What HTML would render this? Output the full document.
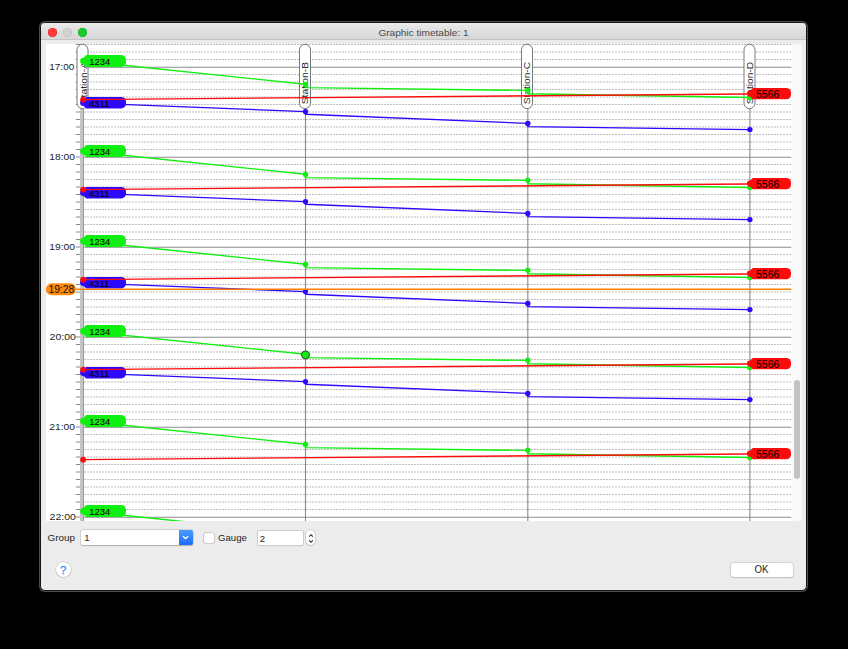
<!DOCTYPE html>
<html><head><meta charset="utf-8">
<style>
html,body{margin:0;padding:0;background:#000;width:848px;height:649px;overflow:hidden;font-family:"Liberation Sans",sans-serif;}
#win{position:absolute;left:40px;top:22px;width:765.2px;height:566.6px;background:#ececec;border:1px solid #151515;border-radius:5px;box-shadow:0 0 0 1px #505050;overflow:hidden;}
#title{position:absolute;left:0;top:0;width:100%;height:16.3px;background:linear-gradient(#eeeeee,#e6e6e6 15%,#d7d7d7);border-bottom:1.2px solid #c4c4c4;}
svg{position:absolute;left:0;top:0;}
svg text{font-family:"Liberation Sans",sans-serif;}
.ab{position:absolute;}
</style></head><body>
<div id="win">
  <div id="title"></div>
</div>
<div class="ab" style="left:47.9px;top:27.7px;width:9px;height:9px;border-radius:50%;background:#fe3a3a;box-shadow:inset 0 0 0 0.6px #e0262a;"></div>
<div class="ab" style="left:62.9px;top:27.7px;width:9px;height:9px;border-radius:50%;background:#d2d2d2;box-shadow:inset 0 0 0 0.6px #c0c0c0;"></div>
<div class="ab" style="left:78px;top:27.7px;width:9px;height:9px;border-radius:50%;background:#1ec932;box-shadow:inset 0 0 0 0.6px #14ad24;"></div>
<div class="ab" style="left:46px;top:43.5px;width:745.5px;height:477.5px;background:#fff;"></div>
<div class="ab" style="left:791.5px;top:43.5px;width:10.5px;height:477.5px;background:#f9f9f9;"></div>
<div class="ab" style="left:793.7px;top:380.4px;width:6px;height:98.6px;border-radius:3px;background:#c2c2c2;"></div>
<div class="ab" style="left:81.3px;top:530.2px;width:111.3px;height:14.8px;background:#fff;box-shadow:0 0 0 0.5px #b8b8b8, 0 0.5px 1px #aaa;border-radius:2px;overflow:hidden;">
  <div class="ab" style="right:0;top:0;width:13.2px;height:14.8px;background:linear-gradient(#4b9cfd,#1a6cf7);"></div>
</div>
<svg width="13" height="15" style="left:179.4px;top:530.2px;" viewBox="0 0 13 15"><polyline points="4,6.2 6.6,8.6 9.2,6.2" fill="none" stroke="#fff" stroke-width="1.4"/></svg>
<div class="ab" style="left:204.3px;top:533px;width:10px;height:10px;background:#fff;border-radius:2px;box-shadow:0 0 0 0.6px #b0b0b0;"></div>
<div class="ab" style="left:256.6px;top:529.8px;width:47px;height:16px;background:#fff;border-radius:2px;box-shadow:inset 0 0 0 1px #cdcdcd, 0 0.3px 0.6px #c8c8c8;"></div>
<div class="ab" style="left:306px;top:530.2px;width:8.6px;height:15.3px;background:#fff;border-radius:4.5px;box-shadow:0 0 0 0.7px #c4c4c4, 0 0.5px 0.8px #c0c0c0;"></div>
<svg width="10" height="16" style="left:305.5px;top:529.8px;" viewBox="0 0 10 16"><polyline points="3.1,6.6 5,4.7 6.9,6.6" fill="none" stroke="#2a2a2a" stroke-width="1.15"/><polyline points="3.1,10.4 5,12.3 6.9,10.4" fill="none" stroke="#2a2a2a" stroke-width="1.15"/></svg>
<div class="ab" style="left:55.7px;top:562.1px;width:15.4px;height:15.4px;border-radius:50%;background:#fff;box-shadow:0 0 0 0.6px #c4c4c4, 0 0.5px 1px #bbb;"></div>
<div class="ab" style="left:730.5px;top:562.8px;width:62px;height:14.6px;background:#fff;border-radius:3px;box-shadow:0 0 0 0.6px #c4c4c4, 0 0.5px 1px #bbb;"></div>
<svg width="848" height="649" viewBox="0 0 848 649">
<defs><clipPath id="pc"><rect x="46" y="43.5" width="745.5" height="477.5"/></clipPath></defs>
<g clip-path="url(#pc)">
<line x1="84" y1="44.5" x2="791.5" y2="44.5" stroke="#bdbdbd" stroke-width="1" stroke-dasharray="2 1"/>
<line x1="75.8" y1="44.5" x2="80" y2="44.5" stroke="#8a8a8a" stroke-width="1"/>
<line x1="84" y1="52.0" x2="791.5" y2="52.0" stroke="#bdbdbd" stroke-width="1" stroke-dasharray="2 1"/>
<line x1="75.8" y1="52.0" x2="80" y2="52.0" stroke="#8a8a8a" stroke-width="1"/>
<line x1="84" y1="59.5" x2="791.5" y2="59.5" stroke="#bdbdbd" stroke-width="1" stroke-dasharray="2 1"/>
<line x1="75.8" y1="59.5" x2="80" y2="59.5" stroke="#8a8a8a" stroke-width="1"/>
<line x1="84" y1="67.25" x2="791.5" y2="67.25" stroke="#8c8c8c" stroke-width="1.1"/>
<line x1="75.8" y1="67.0" x2="80" y2="67.0" stroke="#8a8a8a" stroke-width="1"/>
<line x1="84" y1="74.5" x2="791.5" y2="74.5" stroke="#bdbdbd" stroke-width="1" stroke-dasharray="2 1"/>
<line x1="75.8" y1="74.5" x2="80" y2="74.5" stroke="#8a8a8a" stroke-width="1"/>
<line x1="84" y1="82.0" x2="791.5" y2="82.0" stroke="#bdbdbd" stroke-width="1" stroke-dasharray="2 1"/>
<line x1="75.8" y1="82.0" x2="80" y2="82.0" stroke="#8a8a8a" stroke-width="1"/>
<line x1="84" y1="89.5" x2="791.5" y2="89.5" stroke="#bdbdbd" stroke-width="1" stroke-dasharray="2 1"/>
<line x1="75.8" y1="89.5" x2="80" y2="89.5" stroke="#8a8a8a" stroke-width="1"/>
<line x1="84" y1="97.0" x2="791.5" y2="97.0" stroke="#bdbdbd" stroke-width="1" stroke-dasharray="2 1"/>
<line x1="75.8" y1="97.0" x2="80" y2="97.0" stroke="#8a8a8a" stroke-width="1"/>
<line x1="84" y1="104.5" x2="791.5" y2="104.5" stroke="#bdbdbd" stroke-width="1" stroke-dasharray="2 1"/>
<line x1="75.8" y1="104.5" x2="80" y2="104.5" stroke="#8a8a8a" stroke-width="1"/>
<line x1="84" y1="112.0" x2="791.5" y2="112.0" stroke="#bdbdbd" stroke-width="1" stroke-dasharray="2 1"/>
<line x1="75.8" y1="112.0" x2="80" y2="112.0" stroke="#8a8a8a" stroke-width="1"/>
<line x1="84" y1="119.5" x2="791.5" y2="119.5" stroke="#bdbdbd" stroke-width="1" stroke-dasharray="2 1"/>
<line x1="75.8" y1="119.5" x2="80" y2="119.5" stroke="#8a8a8a" stroke-width="1"/>
<line x1="84" y1="127.0" x2="791.5" y2="127.0" stroke="#bdbdbd" stroke-width="1" stroke-dasharray="2 1"/>
<line x1="75.8" y1="127.0" x2="80" y2="127.0" stroke="#8a8a8a" stroke-width="1"/>
<line x1="84" y1="134.5" x2="791.5" y2="134.5" stroke="#bdbdbd" stroke-width="1" stroke-dasharray="2 1"/>
<line x1="75.8" y1="134.5" x2="80" y2="134.5" stroke="#8a8a8a" stroke-width="1"/>
<line x1="84" y1="142.0" x2="791.5" y2="142.0" stroke="#bdbdbd" stroke-width="1" stroke-dasharray="2 1"/>
<line x1="75.8" y1="142.0" x2="80" y2="142.0" stroke="#8a8a8a" stroke-width="1"/>
<line x1="84" y1="149.5" x2="791.5" y2="149.5" stroke="#bdbdbd" stroke-width="1" stroke-dasharray="2 1"/>
<line x1="75.8" y1="149.5" x2="80" y2="149.5" stroke="#8a8a8a" stroke-width="1"/>
<line x1="84" y1="157.25" x2="791.5" y2="157.25" stroke="#8c8c8c" stroke-width="1.1"/>
<line x1="75.8" y1="157.0" x2="80" y2="157.0" stroke="#8a8a8a" stroke-width="1"/>
<line x1="84" y1="164.5" x2="791.5" y2="164.5" stroke="#bdbdbd" stroke-width="1" stroke-dasharray="2 1"/>
<line x1="75.8" y1="164.5" x2="80" y2="164.5" stroke="#8a8a8a" stroke-width="1"/>
<line x1="84" y1="172.0" x2="791.5" y2="172.0" stroke="#bdbdbd" stroke-width="1" stroke-dasharray="2 1"/>
<line x1="75.8" y1="172.0" x2="80" y2="172.0" stroke="#8a8a8a" stroke-width="1"/>
<line x1="84" y1="179.5" x2="791.5" y2="179.5" stroke="#bdbdbd" stroke-width="1" stroke-dasharray="2 1"/>
<line x1="75.8" y1="179.5" x2="80" y2="179.5" stroke="#8a8a8a" stroke-width="1"/>
<line x1="84" y1="187.0" x2="791.5" y2="187.0" stroke="#bdbdbd" stroke-width="1" stroke-dasharray="2 1"/>
<line x1="75.8" y1="187.0" x2="80" y2="187.0" stroke="#8a8a8a" stroke-width="1"/>
<line x1="84" y1="194.5" x2="791.5" y2="194.5" stroke="#bdbdbd" stroke-width="1" stroke-dasharray="2 1"/>
<line x1="75.8" y1="194.5" x2="80" y2="194.5" stroke="#8a8a8a" stroke-width="1"/>
<line x1="84" y1="202.0" x2="791.5" y2="202.0" stroke="#bdbdbd" stroke-width="1" stroke-dasharray="2 1"/>
<line x1="75.8" y1="202.0" x2="80" y2="202.0" stroke="#8a8a8a" stroke-width="1"/>
<line x1="84" y1="209.5" x2="791.5" y2="209.5" stroke="#bdbdbd" stroke-width="1" stroke-dasharray="2 1"/>
<line x1="75.8" y1="209.5" x2="80" y2="209.5" stroke="#8a8a8a" stroke-width="1"/>
<line x1="84" y1="217.0" x2="791.5" y2="217.0" stroke="#bdbdbd" stroke-width="1" stroke-dasharray="2 1"/>
<line x1="75.8" y1="217.0" x2="80" y2="217.0" stroke="#8a8a8a" stroke-width="1"/>
<line x1="84" y1="224.5" x2="791.5" y2="224.5" stroke="#bdbdbd" stroke-width="1" stroke-dasharray="2 1"/>
<line x1="75.8" y1="224.5" x2="80" y2="224.5" stroke="#8a8a8a" stroke-width="1"/>
<line x1="84" y1="232.0" x2="791.5" y2="232.0" stroke="#bdbdbd" stroke-width="1" stroke-dasharray="2 1"/>
<line x1="75.8" y1="232.0" x2="80" y2="232.0" stroke="#8a8a8a" stroke-width="1"/>
<line x1="84" y1="239.5" x2="791.5" y2="239.5" stroke="#bdbdbd" stroke-width="1" stroke-dasharray="2 1"/>
<line x1="75.8" y1="239.5" x2="80" y2="239.5" stroke="#8a8a8a" stroke-width="1"/>
<line x1="84" y1="247.25" x2="791.5" y2="247.25" stroke="#8c8c8c" stroke-width="1.1"/>
<line x1="75.8" y1="247.0" x2="80" y2="247.0" stroke="#8a8a8a" stroke-width="1"/>
<line x1="84" y1="254.5" x2="791.5" y2="254.5" stroke="#bdbdbd" stroke-width="1" stroke-dasharray="2 1"/>
<line x1="75.8" y1="254.5" x2="80" y2="254.5" stroke="#8a8a8a" stroke-width="1"/>
<line x1="84" y1="262.0" x2="791.5" y2="262.0" stroke="#bdbdbd" stroke-width="1" stroke-dasharray="2 1"/>
<line x1="75.8" y1="262.0" x2="80" y2="262.0" stroke="#8a8a8a" stroke-width="1"/>
<line x1="84" y1="269.5" x2="791.5" y2="269.5" stroke="#bdbdbd" stroke-width="1" stroke-dasharray="2 1"/>
<line x1="75.8" y1="269.5" x2="80" y2="269.5" stroke="#8a8a8a" stroke-width="1"/>
<line x1="84" y1="277.0" x2="791.5" y2="277.0" stroke="#bdbdbd" stroke-width="1" stroke-dasharray="2 1"/>
<line x1="75.8" y1="277.0" x2="80" y2="277.0" stroke="#8a8a8a" stroke-width="1"/>
<line x1="84" y1="284.5" x2="791.5" y2="284.5" stroke="#bdbdbd" stroke-width="1" stroke-dasharray="2 1"/>
<line x1="75.8" y1="284.5" x2="80" y2="284.5" stroke="#8a8a8a" stroke-width="1"/>
<line x1="84" y1="292.0" x2="791.5" y2="292.0" stroke="#bdbdbd" stroke-width="1" stroke-dasharray="2 1"/>
<line x1="75.8" y1="292.0" x2="80" y2="292.0" stroke="#8a8a8a" stroke-width="1"/>
<line x1="84" y1="299.5" x2="791.5" y2="299.5" stroke="#bdbdbd" stroke-width="1" stroke-dasharray="2 1"/>
<line x1="75.8" y1="299.5" x2="80" y2="299.5" stroke="#8a8a8a" stroke-width="1"/>
<line x1="84" y1="307.0" x2="791.5" y2="307.0" stroke="#bdbdbd" stroke-width="1" stroke-dasharray="2 1"/>
<line x1="75.8" y1="307.0" x2="80" y2="307.0" stroke="#8a8a8a" stroke-width="1"/>
<line x1="84" y1="314.5" x2="791.5" y2="314.5" stroke="#bdbdbd" stroke-width="1" stroke-dasharray="2 1"/>
<line x1="75.8" y1="314.5" x2="80" y2="314.5" stroke="#8a8a8a" stroke-width="1"/>
<line x1="84" y1="322.0" x2="791.5" y2="322.0" stroke="#bdbdbd" stroke-width="1" stroke-dasharray="2 1"/>
<line x1="75.8" y1="322.0" x2="80" y2="322.0" stroke="#8a8a8a" stroke-width="1"/>
<line x1="84" y1="329.5" x2="791.5" y2="329.5" stroke="#bdbdbd" stroke-width="1" stroke-dasharray="2 1"/>
<line x1="75.8" y1="329.5" x2="80" y2="329.5" stroke="#8a8a8a" stroke-width="1"/>
<line x1="84" y1="337.25" x2="791.5" y2="337.25" stroke="#8c8c8c" stroke-width="1.1"/>
<line x1="75.8" y1="337.0" x2="80" y2="337.0" stroke="#8a8a8a" stroke-width="1"/>
<line x1="84" y1="344.5" x2="791.5" y2="344.5" stroke="#bdbdbd" stroke-width="1" stroke-dasharray="2 1"/>
<line x1="75.8" y1="344.5" x2="80" y2="344.5" stroke="#8a8a8a" stroke-width="1"/>
<line x1="84" y1="352.0" x2="791.5" y2="352.0" stroke="#bdbdbd" stroke-width="1" stroke-dasharray="2 1"/>
<line x1="75.8" y1="352.0" x2="80" y2="352.0" stroke="#8a8a8a" stroke-width="1"/>
<line x1="84" y1="359.5" x2="791.5" y2="359.5" stroke="#bdbdbd" stroke-width="1" stroke-dasharray="2 1"/>
<line x1="75.8" y1="359.5" x2="80" y2="359.5" stroke="#8a8a8a" stroke-width="1"/>
<line x1="84" y1="367.0" x2="791.5" y2="367.0" stroke="#bdbdbd" stroke-width="1" stroke-dasharray="2 1"/>
<line x1="75.8" y1="367.0" x2="80" y2="367.0" stroke="#8a8a8a" stroke-width="1"/>
<line x1="84" y1="374.5" x2="791.5" y2="374.5" stroke="#bdbdbd" stroke-width="1" stroke-dasharray="2 1"/>
<line x1="75.8" y1="374.5" x2="80" y2="374.5" stroke="#8a8a8a" stroke-width="1"/>
<line x1="84" y1="382.0" x2="791.5" y2="382.0" stroke="#bdbdbd" stroke-width="1" stroke-dasharray="2 1"/>
<line x1="75.8" y1="382.0" x2="80" y2="382.0" stroke="#8a8a8a" stroke-width="1"/>
<line x1="84" y1="389.5" x2="791.5" y2="389.5" stroke="#bdbdbd" stroke-width="1" stroke-dasharray="2 1"/>
<line x1="75.8" y1="389.5" x2="80" y2="389.5" stroke="#8a8a8a" stroke-width="1"/>
<line x1="84" y1="397.0" x2="791.5" y2="397.0" stroke="#bdbdbd" stroke-width="1" stroke-dasharray="2 1"/>
<line x1="75.8" y1="397.0" x2="80" y2="397.0" stroke="#8a8a8a" stroke-width="1"/>
<line x1="84" y1="404.5" x2="791.5" y2="404.5" stroke="#bdbdbd" stroke-width="1" stroke-dasharray="2 1"/>
<line x1="75.8" y1="404.5" x2="80" y2="404.5" stroke="#8a8a8a" stroke-width="1"/>
<line x1="84" y1="412.0" x2="791.5" y2="412.0" stroke="#bdbdbd" stroke-width="1" stroke-dasharray="2 1"/>
<line x1="75.8" y1="412.0" x2="80" y2="412.0" stroke="#8a8a8a" stroke-width="1"/>
<line x1="84" y1="419.5" x2="791.5" y2="419.5" stroke="#bdbdbd" stroke-width="1" stroke-dasharray="2 1"/>
<line x1="75.8" y1="419.5" x2="80" y2="419.5" stroke="#8a8a8a" stroke-width="1"/>
<line x1="84" y1="427.25" x2="791.5" y2="427.25" stroke="#8c8c8c" stroke-width="1.1"/>
<line x1="75.8" y1="427.0" x2="80" y2="427.0" stroke="#8a8a8a" stroke-width="1"/>
<line x1="84" y1="434.5" x2="791.5" y2="434.5" stroke="#bdbdbd" stroke-width="1" stroke-dasharray="2 1"/>
<line x1="75.8" y1="434.5" x2="80" y2="434.5" stroke="#8a8a8a" stroke-width="1"/>
<line x1="84" y1="442.0" x2="791.5" y2="442.0" stroke="#bdbdbd" stroke-width="1" stroke-dasharray="2 1"/>
<line x1="75.8" y1="442.0" x2="80" y2="442.0" stroke="#8a8a8a" stroke-width="1"/>
<line x1="84" y1="449.5" x2="791.5" y2="449.5" stroke="#bdbdbd" stroke-width="1" stroke-dasharray="2 1"/>
<line x1="75.8" y1="449.5" x2="80" y2="449.5" stroke="#8a8a8a" stroke-width="1"/>
<line x1="84" y1="457.0" x2="791.5" y2="457.0" stroke="#bdbdbd" stroke-width="1" stroke-dasharray="2 1"/>
<line x1="75.8" y1="457.0" x2="80" y2="457.0" stroke="#8a8a8a" stroke-width="1"/>
<line x1="84" y1="464.5" x2="791.5" y2="464.5" stroke="#bdbdbd" stroke-width="1" stroke-dasharray="2 1"/>
<line x1="75.8" y1="464.5" x2="80" y2="464.5" stroke="#8a8a8a" stroke-width="1"/>
<line x1="84" y1="472.0" x2="791.5" y2="472.0" stroke="#bdbdbd" stroke-width="1" stroke-dasharray="2 1"/>
<line x1="75.8" y1="472.0" x2="80" y2="472.0" stroke="#8a8a8a" stroke-width="1"/>
<line x1="84" y1="479.5" x2="791.5" y2="479.5" stroke="#bdbdbd" stroke-width="1" stroke-dasharray="2 1"/>
<line x1="75.8" y1="479.5" x2="80" y2="479.5" stroke="#8a8a8a" stroke-width="1"/>
<line x1="84" y1="487.0" x2="791.5" y2="487.0" stroke="#bdbdbd" stroke-width="1" stroke-dasharray="2 1"/>
<line x1="75.8" y1="487.0" x2="80" y2="487.0" stroke="#8a8a8a" stroke-width="1"/>
<line x1="84" y1="494.5" x2="791.5" y2="494.5" stroke="#bdbdbd" stroke-width="1" stroke-dasharray="2 1"/>
<line x1="75.8" y1="494.5" x2="80" y2="494.5" stroke="#8a8a8a" stroke-width="1"/>
<line x1="84" y1="502.0" x2="791.5" y2="502.0" stroke="#bdbdbd" stroke-width="1" stroke-dasharray="2 1"/>
<line x1="75.8" y1="502.0" x2="80" y2="502.0" stroke="#8a8a8a" stroke-width="1"/>
<line x1="84" y1="509.5" x2="791.5" y2="509.5" stroke="#bdbdbd" stroke-width="1" stroke-dasharray="2 1"/>
<line x1="75.8" y1="509.5" x2="80" y2="509.5" stroke="#8a8a8a" stroke-width="1"/>
<line x1="84" y1="517.25" x2="791.5" y2="517.25" stroke="#8c8c8c" stroke-width="1.1"/>
<line x1="75.8" y1="517.0" x2="80" y2="517.0" stroke="#8a8a8a" stroke-width="1"/>
<text x="49.3" y="70.05" font-size="9.8" fill="#1e1e1e" textLength="25.0" lengthAdjust="spacingAndGlyphs">17:00</text>
<text x="49.3" y="160.05" font-size="9.8" fill="#1e1e1e" textLength="25.8" lengthAdjust="spacingAndGlyphs">18:00</text>
<text x="49.3" y="250.05" font-size="9.8" fill="#1e1e1e" textLength="25.8" lengthAdjust="spacingAndGlyphs">19:00</text>
<text x="49.6" y="340.05" font-size="9.8" fill="#1e1e1e" textLength="26.3" lengthAdjust="spacingAndGlyphs">20:00</text>
<text x="49.3" y="430.05" font-size="9.8" fill="#1e1e1e" textLength="25.8" lengthAdjust="spacingAndGlyphs">21:00</text>
<text x="49.6" y="520.05" font-size="9.8" fill="#1e1e1e" textLength="26.3" lengthAdjust="spacingAndGlyphs">22:00</text>
<rect x="80" y="43.5" width="4" height="477.5" fill="#c4c4c4"/>
<line x1="83.5" y1="43.5" x2="83.5" y2="521" stroke="#9a9a9a" stroke-width="1"/>
<line x1="305.5" y1="43.5" x2="305.5" y2="525" stroke="#8a8a8a" stroke-width="1.1"/>
<line x1="527.8" y1="43.5" x2="527.8" y2="525" stroke="#8a8a8a" stroke-width="1.1"/>
<line x1="749.9" y1="43.5" x2="749.9" y2="525" stroke="#8a8a8a" stroke-width="1.1"/>
<rect x="77.0" y="44.3" width="11" height="64.3" rx="5.5" ry="5.5" fill="#fff" stroke="#6a6a6a" stroke-width="0.9"/>
<text transform="translate(86.5,104.3) rotate(-90)" font-size="9.6" fill="#2a2a2a" textLength="42.4" lengthAdjust="spacingAndGlyphs">Station-A</text>
<rect x="299.5" y="44.3" width="11" height="64.3" rx="5.5" ry="5.5" fill="#fff" stroke="#6a6a6a" stroke-width="0.9"/>
<text transform="translate(308.0,104.3) rotate(-90)" font-size="9.6" fill="#2a2a2a" textLength="42.4" lengthAdjust="spacingAndGlyphs">Station-B</text>
<rect x="521.5" y="44.3" width="11" height="64.3" rx="5.5" ry="5.5" fill="#fff" stroke="#6a6a6a" stroke-width="0.9"/>
<text transform="translate(530.0,104.3) rotate(-90)" font-size="9.6" fill="#2a2a2a" textLength="42.4" lengthAdjust="spacingAndGlyphs">Station-C</text>
<rect x="744.0" y="44.3" width="11" height="64.3" rx="5.5" ry="5.5" fill="#fff" stroke="#6a6a6a" stroke-width="0.9"/>
<text transform="translate(752.5,104.3) rotate(-90)" font-size="9.6" fill="#2a2a2a" textLength="42.4" lengthAdjust="spacingAndGlyphs">Station-D</text>
<polyline points="82.50,61.00 305.50,84.30 305.50,87.60 527.80,90.40 527.80,93.80 749.90,97.50" fill="none" stroke="#10f010" stroke-width="1.4" stroke-linejoin="round"/>
<polyline points="82.50,151.00 305.50,174.30 305.50,177.60 527.80,180.40 527.80,183.80 749.90,187.50" fill="none" stroke="#10f010" stroke-width="1.4" stroke-linejoin="round"/>
<polyline points="82.50,241.00 305.50,264.30 305.50,267.60 527.80,270.40 527.80,273.80 749.90,277.50" fill="none" stroke="#10f010" stroke-width="1.4" stroke-linejoin="round"/>
<polyline points="82.50,331.00 305.50,354.30 305.50,357.60 527.80,360.40 527.80,363.80 749.90,367.50" fill="none" stroke="#10f010" stroke-width="1.4" stroke-linejoin="round"/>
<polyline points="82.50,421.00 305.50,444.30 305.50,447.60 527.80,450.40 527.80,453.80 749.90,457.50" fill="none" stroke="#10f010" stroke-width="1.4" stroke-linejoin="round"/>
<polyline points="82.50,511.00 305.50,534.30 305.50,537.60 527.80,540.40 527.80,543.80 749.90,547.50" fill="none" stroke="#10f010" stroke-width="1.4" stroke-linejoin="round"/>
<circle cx="305.5" cy="84.5" r="2.7" fill="#10f010"/>
<circle cx="527.8" cy="90.3" r="2.7" fill="#10f010"/>
<circle cx="749.9" cy="97.5" r="2.7" fill="#10f010"/>
<circle cx="305.5" cy="174.5" r="2.7" fill="#10f010"/>
<circle cx="527.8" cy="180.3" r="2.7" fill="#10f010"/>
<circle cx="749.9" cy="187.5" r="2.7" fill="#10f010"/>
<circle cx="305.5" cy="264.5" r="2.7" fill="#10f010"/>
<circle cx="527.8" cy="270.3" r="2.7" fill="#10f010"/>
<circle cx="749.9" cy="277.5" r="2.7" fill="#10f010"/>
<circle cx="305.5" cy="354.9" r="4" fill="#10f010" stroke="#222" stroke-width="0.8"/>
<circle cx="527.8" cy="360.3" r="2.7" fill="#10f010"/>
<circle cx="749.9" cy="367.5" r="2.7" fill="#10f010"/>
<circle cx="305.5" cy="444.5" r="2.7" fill="#10f010"/>
<circle cx="527.8" cy="450.3" r="2.7" fill="#10f010"/>
<circle cx="749.9" cy="457.5" r="2.7" fill="#10f010"/>
<circle cx="305.5" cy="534.5" r="2.7" fill="#10f010"/>
<circle cx="527.8" cy="540.3" r="2.7" fill="#10f010"/>
<circle cx="749.9" cy="547.5" r="2.7" fill="#10f010"/>
<path d="M82.90,58.40 L86.20,55.10 L121.20,55.10 A4.8,4.8 0 0 1 126.00,59.90 L126.00,62.20 A4.8,4.8 0 0 1 121.20,67.00 L86.20,67.00 L82.90,63.70 Z" fill="#10f010"/><circle cx="83.4" cy="61.05" r="3.3" fill="#10f010"/><text x="89.2" y="64.85" font-size="9.5" fill="#000" textLength="21" lengthAdjust="spacingAndGlyphs">1234</text>
<path d="M82.90,148.40 L86.20,145.10 L121.20,145.10 A4.8,4.8 0 0 1 126.00,149.90 L126.00,152.20 A4.8,4.8 0 0 1 121.20,157.00 L86.20,157.00 L82.90,153.70 Z" fill="#10f010"/><circle cx="83.4" cy="151.05" r="3.3" fill="#10f010"/><text x="89.2" y="154.85" font-size="9.5" fill="#000" textLength="21" lengthAdjust="spacingAndGlyphs">1234</text>
<path d="M82.90,238.40 L86.20,235.10 L121.20,235.10 A4.8,4.8 0 0 1 126.00,239.90 L126.00,242.20 A4.8,4.8 0 0 1 121.20,247.00 L86.20,247.00 L82.90,243.70 Z" fill="#10f010"/><circle cx="83.4" cy="241.05" r="3.3" fill="#10f010"/><text x="89.2" y="244.85" font-size="9.5" fill="#000" textLength="21" lengthAdjust="spacingAndGlyphs">1234</text>
<path d="M82.90,328.40 L86.20,325.10 L121.20,325.10 A4.8,4.8 0 0 1 126.00,329.90 L126.00,332.20 A4.8,4.8 0 0 1 121.20,337.00 L86.20,337.00 L82.90,333.70 Z" fill="#10f010"/><circle cx="83.4" cy="331.05" r="3.3" fill="#10f010"/><text x="89.2" y="334.85" font-size="9.5" fill="#000" textLength="21" lengthAdjust="spacingAndGlyphs">1234</text>
<path d="M82.90,418.40 L86.20,415.10 L121.20,415.10 A4.8,4.8 0 0 1 126.00,419.90 L126.00,422.20 A4.8,4.8 0 0 1 121.20,427.00 L86.20,427.00 L82.90,423.70 Z" fill="#10f010"/><circle cx="83.4" cy="421.05" r="3.3" fill="#10f010"/><text x="89.2" y="424.85" font-size="9.5" fill="#000" textLength="21" lengthAdjust="spacingAndGlyphs">1234</text>
<path d="M82.90,508.40 L86.20,505.10 L121.20,505.10 A4.8,4.8 0 0 1 126.00,509.90 L126.00,512.20 A4.8,4.8 0 0 1 121.20,517.00 L86.20,517.00 L82.90,513.70 Z" fill="#10f010"/><circle cx="83.4" cy="511.05" r="3.3" fill="#10f010"/><text x="89.2" y="514.85" font-size="9.5" fill="#000" textLength="21" lengthAdjust="spacingAndGlyphs">1234</text>
<polyline points="82.50,102.90 305.50,111.60 305.50,114.20 527.80,123.40 527.80,126.60 749.90,129.60" fill="none" stroke="#2c08ff" stroke-width="1.4" stroke-linejoin="round"/>
<polyline points="82.50,192.90 305.50,201.60 305.50,204.20 527.80,213.40 527.80,216.60 749.90,219.60" fill="none" stroke="#2c08ff" stroke-width="1.4" stroke-linejoin="round"/>
<polyline points="82.50,282.90 305.50,291.60 305.50,294.20 527.80,303.40 527.80,306.60 749.90,309.60" fill="none" stroke="#2c08ff" stroke-width="1.4" stroke-linejoin="round"/>
<polyline points="82.50,372.90 305.50,381.60 305.50,384.20 527.80,393.40 527.80,396.60 749.90,399.60" fill="none" stroke="#2c08ff" stroke-width="1.4" stroke-linejoin="round"/>
<circle cx="305.5" cy="111.6" r="2.7" fill="#2c08ff"/>
<circle cx="527.8" cy="123.5" r="2.7" fill="#2c08ff"/>
<circle cx="749.9" cy="129.6" r="2.7" fill="#2c08ff"/>
<circle cx="305.5" cy="201.6" r="2.7" fill="#2c08ff"/>
<circle cx="527.8" cy="213.5" r="2.7" fill="#2c08ff"/>
<circle cx="749.9" cy="219.6" r="2.7" fill="#2c08ff"/>
<circle cx="305.5" cy="291.6" r="2.7" fill="#2c08ff"/>
<circle cx="527.8" cy="303.5" r="2.7" fill="#2c08ff"/>
<circle cx="749.9" cy="309.6" r="2.7" fill="#2c08ff"/>
<circle cx="305.5" cy="381.6" r="2.7" fill="#2c08ff"/>
<circle cx="527.8" cy="393.5" r="2.7" fill="#2c08ff"/>
<circle cx="749.9" cy="399.6" r="2.7" fill="#2c08ff"/>
<path d="M82.90,100.20 L86.20,96.90 L121.20,96.90 A4.8,4.8 0 0 1 126.00,101.70 L126.00,103.70 A4.8,4.8 0 0 1 121.20,108.50 L86.20,108.50 L82.90,105.20 Z" fill="#2c08ff"/><circle cx="83.4" cy="102.7" r="3.3" fill="#2c08ff"/><text x="88.7" y="106.9" font-size="9.5" fill="#000" textLength="20.8" lengthAdjust="spacingAndGlyphs">4311</text>
<path d="M82.90,190.20 L86.20,186.90 L121.20,186.90 A4.8,4.8 0 0 1 126.00,191.70 L126.00,193.70 A4.8,4.8 0 0 1 121.20,198.50 L86.20,198.50 L82.90,195.20 Z" fill="#2c08ff"/><circle cx="83.4" cy="192.7" r="3.3" fill="#2c08ff"/><text x="88.7" y="196.9" font-size="9.5" fill="#000" textLength="20.8" lengthAdjust="spacingAndGlyphs">4311</text>
<path d="M82.90,280.20 L86.20,276.90 L121.20,276.90 A4.8,4.8 0 0 1 126.00,281.70 L126.00,283.70 A4.8,4.8 0 0 1 121.20,288.50 L86.20,288.50 L82.90,285.20 Z" fill="#2c08ff"/><circle cx="83.4" cy="282.7" r="3.3" fill="#2c08ff"/><text x="88.7" y="286.9" font-size="9.5" fill="#000" textLength="20.8" lengthAdjust="spacingAndGlyphs">4311</text>
<path d="M82.90,370.20 L86.20,366.90 L121.20,366.90 A4.8,4.8 0 0 1 126.00,371.70 L126.00,373.70 A4.8,4.8 0 0 1 121.20,378.50 L86.20,378.50 L82.90,375.20 Z" fill="#2c08ff"/><circle cx="83.4" cy="372.7" r="3.3" fill="#2c08ff"/><text x="88.7" y="376.9" font-size="9.5" fill="#000" textLength="20.8" lengthAdjust="spacingAndGlyphs">4311</text>
<polyline points="747.00,94.00 82.50,99.60" fill="none" stroke="#ff0a0a" stroke-width="1.4" stroke-linejoin="round"/>
<polyline points="747.00,184.00 82.50,189.60" fill="none" stroke="#ff0a0a" stroke-width="1.4" stroke-linejoin="round"/>
<polyline points="747.00,274.00 82.50,279.60" fill="none" stroke="#ff0a0a" stroke-width="1.4" stroke-linejoin="round"/>
<polyline points="747.00,364.00 82.50,369.60" fill="none" stroke="#ff0a0a" stroke-width="1.4" stroke-linejoin="round"/>
<polyline points="747.00,454.00 82.50,459.60" fill="none" stroke="#ff0a0a" stroke-width="1.4" stroke-linejoin="round"/>
<circle cx="83.1" cy="99.7" r="2.9" fill="#ff0a0a"/>
<circle cx="83.1" cy="189.7" r="2.9" fill="#ff0a0a"/>
<circle cx="83.1" cy="279.7" r="2.9" fill="#ff0a0a"/>
<circle cx="83.1" cy="369.7" r="2.9" fill="#ff0a0a"/>
<circle cx="83.1" cy="459.7" r="2.9" fill="#ff0a0a"/>
<path d="M749.50,91.20 L752.80,87.90 L786.20,87.90 A4.8,4.8 0 0 1 791.00,92.70 L791.00,94.50 A4.8,4.8 0 0 1 786.20,99.30 L752.80,99.30 L749.50,96.00 Z" fill="#ff0a0a"/><circle cx="750" cy="93.6" r="3.1" fill="#ff0a0a"/><text x="756" y="98.1" font-size="10.5" fill="#000" textLength="23.3" lengthAdjust="spacingAndGlyphs">5566</text>
<path d="M749.50,181.20 L752.80,177.90 L786.20,177.90 A4.8,4.8 0 0 1 791.00,182.70 L791.00,184.50 A4.8,4.8 0 0 1 786.20,189.30 L752.80,189.30 L749.50,186.00 Z" fill="#ff0a0a"/><circle cx="750" cy="183.6" r="3.1" fill="#ff0a0a"/><text x="756" y="188.1" font-size="10.5" fill="#000" textLength="23.3" lengthAdjust="spacingAndGlyphs">5566</text>
<path d="M749.50,271.20 L752.80,267.90 L786.20,267.90 A4.8,4.8 0 0 1 791.00,272.70 L791.00,274.50 A4.8,4.8 0 0 1 786.20,279.30 L752.80,279.30 L749.50,276.00 Z" fill="#ff0a0a"/><circle cx="750" cy="273.6" r="3.1" fill="#ff0a0a"/><text x="756" y="278.1" font-size="10.5" fill="#000" textLength="23.3" lengthAdjust="spacingAndGlyphs">5566</text>
<path d="M749.50,361.20 L752.80,357.90 L786.20,357.90 A4.8,4.8 0 0 1 791.00,362.70 L791.00,364.50 A4.8,4.8 0 0 1 786.20,369.30 L752.80,369.30 L749.50,366.00 Z" fill="#ff0a0a"/><circle cx="750" cy="363.6" r="3.1" fill="#ff0a0a"/><text x="756" y="368.1" font-size="10.5" fill="#000" textLength="23.3" lengthAdjust="spacingAndGlyphs">5566</text>
<path d="M749.50,451.20 L752.80,447.90 L786.20,447.90 A4.8,4.8 0 0 1 791.00,452.70 L791.00,454.50 A4.8,4.8 0 0 1 786.20,459.30 L752.80,459.30 L749.50,456.00 Z" fill="#ff0a0a"/><circle cx="750" cy="453.6" r="3.1" fill="#ff0a0a"/><text x="756" y="458.1" font-size="10.5" fill="#000" textLength="23.3" lengthAdjust="spacingAndGlyphs">5566</text>
<line x1="76" y1="289.3" x2="791.5" y2="289.3" stroke="#ff8000" stroke-width="1.4"/>
<rect x="45.9" y="283.3" width="30.1" height="12" rx="6" fill="#ff8a10"/>
<text x="48.4" y="292.8" font-size="10" fill="#111" textLength="26" lengthAdjust="spacingAndGlyphs">19:28</text>
</g>
<text x="378.4" y="35.8" font-size="9.8" fill="#4a4a4a" textLength="90.2" lengthAdjust="spacingAndGlyphs">Graphic timetable: 1</text>
<text x="47.5" y="541.2" font-size="9.3" fill="#262626" textLength="27.6" lengthAdjust="spacingAndGlyphs">Group</text>
<text x="84.3" y="541.2" font-size="9.5" fill="#222">1</text>
<text x="218" y="541.2" font-size="9.3" fill="#262626" textLength="28.8" lengthAdjust="spacingAndGlyphs">Gauge</text>
<text x="259.7" y="542.3" font-size="9.6" fill="#222">2</text>
<text x="754.5" y="573.2" font-size="10" fill="#222" textLength="13.9" lengthAdjust="spacingAndGlyphs">OK</text>
<text x="63.4" y="573.6" font-size="11" fill="#2a7ff6" stroke="#2a7ff6" stroke-width="0.25" text-anchor="middle">?</text>
</svg>
</body></html>
